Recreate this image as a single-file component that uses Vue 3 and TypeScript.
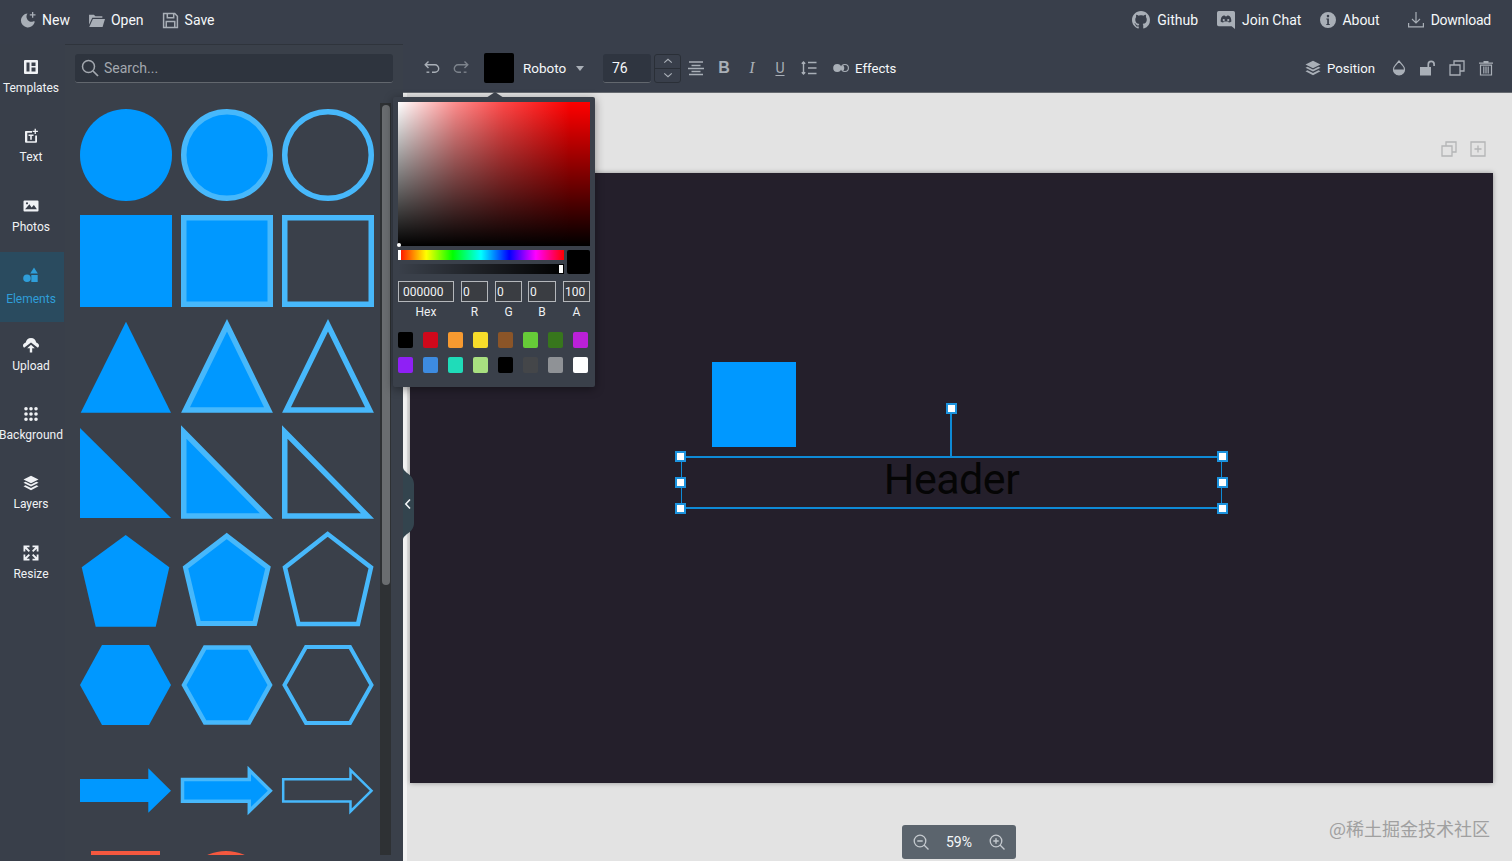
<script setup lang="ts">
interface SideItem { label: string; active?: boolean; paths: string[] }

const sideItems: SideItem[] = [
  { label: 'Templates', paths: ['M2 1h12a1 1 0 011 1v12a1 1 0 01-1 1H2a1 1 0 01-1-1V2a1 1 0 011-1zm1.500 2.500v9h3v-9h-3zm5 0v3.500h4V3.500h-4zm0 5v4h4v-4h-4z'] },
  { label: 'Text', paths: ['M2.800 3H9v1.700H4.300v8.500h7.900V7.500H14v6.200a1 1 0 01-1 1H3a1 1 0 01-1-1V3.800a.8.8 0 01.8-.8z', 'M5.500 6.500h5V8H8.800v3.800H7.200V8H5.500z', 'M11.600.8h1.300v2h2v1.300h-2v2h-1.300v-2h-2V2.800h2z'] },
  { label: 'Photos', paths: ['M1.500 2.500h13a1 1 0 011 1v9a1 1 0 01-1 1h-13a1 1 0 01-1-1v-9a1 1 0 011-1zm.6 8.800h11.800l-3-4.300-2.300 2.400-2.200-3.200zM4 4.200a1.100 1.100 0 100 2.200 1.100 1.100 0 000-2.200z'] },
  { label: 'Elements', active: true, paths: ['M11 .5l3.800 6H7.200z', 'M8.300 8h6.400v7H8.300z', 'M4 7.400a3.800 3.800 0 110 7.600 3.800 3.800 0 010-7.600z'] },
  { label: 'Upload', paths: ['M8 1c2.900 0 4.800 1.900 5.200 4.400 1.500.4 2.800 1.700 2.800 3.200 0 1-.5 1.700-1.100 2.200L8 5.500 1.100 10.800C.5 10.300 0 9.600 0 8.600c0-1.500 1.300-2.800 2.800-3.200C3.200 2.900 5.100 1 8 1z', 'M8 7.800l3.800 3.500H9.200V15.500H6.800v-4.200H4.200z'] },
  { label: 'Background', paths: ['M3 1a1.800 1.800 0 110 3.600A1.800 1.800 0 013 1zm5 0a1.800 1.800 0 110 3.600A1.800 1.800 0 018 1zm5 0a1.800 1.800 0 110 3.600A1.800 1.800 0 0113 1zM3 6.200a1.800 1.800 0 110 3.600 1.800 1.800 0 010-3.600zm5 0a1.800 1.800 0 110 3.600 1.800 1.800 0 010-3.600zm5 0a1.800 1.800 0 110 3.600 1.800 1.800 0 010-3.600zM3 11.400a1.800 1.800 0 110 3.600 1.800 1.800 0 010-3.600zm5 0a1.800 1.800 0 110 3.600 1.800 1.800 0 010-3.600zm5 0a1.800 1.800 0 110 3.600 1.800 1.800 0 010-3.600z'] },
  { label: 'Layers', paths: ['M8 .8l7.500 3.700L8 8.300.5 4.500z', 'M2.500 6.800L8 9.600l5.500-2.800 2 1L8 11.600.5 7.800z', 'M2.500 10.200L8 13l5.500-2.800 2 1L8 15.200.5 11.200z'] },
  { label: 'Resize', paths: ['M.5.5h6V2.300H3.700L7 5.700 5.700 7 2.300 3.700V6.500H.5z', 'M15.500.5h-6V2.300h2.800L9 5.700 10.300 7l3.400-3.300V6.500h1.800z', 'M.5 15.500h6v-1.800H3.700L7 10.300 5.700 9l-3.400 3.300V9.500H.5z', 'M15.500 15.500h-6v-1.800h2.800L9 10.300 10.300 9l3.400 3.300V9.500h1.800z'] }
]

const swatches: string[] = [
  '#000000', '#d0081b', '#f79a30', '#f6dc2a', '#8b5528', '#66cc38', '#37761c', '#bb20d8',
  '#8f20f5', '#3d8be0', '#1fdcb9', '#a8e080', '#000000', '#444649', '#8f9296', '#ffffff'
]

const colorFields: { label: string; value: string; kind: string }[] = [
  { label: 'Hex', value: '000000', kind: 'hex' },
  { label: 'R', value: '0', kind: 'r' },
  { label: 'G', value: '0', kind: 'g' },
  { label: 'B', value: '0', kind: 'b' },
  { label: 'A', value: '100', kind: 'a' }
]

const handles: string[] = ['tl', 'tr', 'ml', 'mr', 'bl', 'br']
</script>

<template>
  <div class="app">
    <header class="nav">
      <div class="nav-group">
        <div class="nav-btn">
          <svg class="ic" viewBox="0 0 16 16"><path d="M7.500 1.500a7 7 0 107.300 8.300c-.6-.5-1.100-.6-1.800-.3a4.700 4.700 0 01-6.200-3.300 5 5 0 01.700-4.700z"/><path d="M12 0h1.300v2.200h2.200v1.300h-2.200v2.200H12V3.500H9.800V2.200H12z"/></svg>
          <span>New</span>
        </div>
        <div class="nav-btn">
          <svg class="ic ic-17" viewBox="0 0 16 16"><path d="M1 2.500h4.500L7 4h6.500v1.500H4L1 12z"/><path d="M4.600 6.500H16l-2.300 7.500H1.200z"/></svg>
          <span>Open</span>
        </div>
        <div class="nav-btn">
          <svg class="ic ic-17" viewBox="0 0 16 16"><path d="M1.500 1.500h10.500l2.500 2.500v10.500H1.500zM5 1.500v4h6v-4M4 14.500V9h8v5.500" fill="none" stroke="currentColor" stroke-width="1.400"/></svg>
          <span>Save</span>
        </div>
      </div>
      <div class="nav-group nav-right">
        <div class="nav-btn">
          <svg class="ic ic-18" viewBox="0 0 16 16"><path d="M8 0C3.580 0 0 3.580 0 8c0 3.540 2.290 6.530 5.470 7.590.4.070.55-.17.55-.38 0-.19-.01-.82-.01-1.490-2.010.37-2.530-.49-2.690-.94-.09-.23-.48-.94-.82-1.130-.28-.15-.68-.52-.01-.53.63-.01 1.080.58 1.230.82.72 1.210 1.870.87 2.330.66.070-.52.28-.87.51-1.070-1.780-.2-3.640-.89-3.640-3.950 0-.87.31-1.590.82-2.150-.08-.2-.36-1.020.08-2.120 0 0 .67-.21 2.200.82.64-.18 1.320-.27 2-.27.68 0 1.360.09 2 .27 1.530-1.040 2.200-.82 2.200-.82.44 1.100.16 1.920.08 2.120.51.56.82 1.270.82 2.150 0 3.070-1.870 3.750-3.650 3.950.29.25.54.73.54 1.480 0 1.070-.01 1.930-.01 2.200 0 .21.15.46.55.38A8.013 8.013 0 0016 8c0-4.420-3.580-8-8-8z"/></svg>
          <span>Github</span>
        </div>
        <div class="nav-btn">
          <svg class="ic ic-18" viewBox="0 0 16 16"><path fill-rule="evenodd" d="M1.500 0h13A1.500 1.500 0 0116 1.500V16l-3-2.500H1.500A1.500 1.500 0 010 12V1.500A1.500 1.500 0 011.500 0zM5 4.500C4 5 3.300 6.800 3.200 9.300c.7.7 1.600 1 2.300 1l.6-.9h3.800l.6.9c.7 0 1.600-.3 2.300-1-.1-2.500-.8-4.300-1.800-4.800-.7-.3-1.400-.4-1.900-.4l-.2.5H7.100l-.2-.5c-.5 0-1.200.1-1.900.4zM6 7a1 1 0 110 2 1 1 0 010-2zm4 0a1 1 0 110 2 1 1 0 010-2z"/></svg>
          <span>Join Chat</span>
        </div>
        <div class="nav-btn nav-about">
          <svg class="ic" viewBox="0 0 16 16"><path fill-rule="evenodd" d="M8 0a8 8 0 110 16A8 8 0 018 0zm0 2.800a1.300 1.300 0 100 2.600 1.300 1.300 0 000-2.600zM6.300 6.500v1.100h.9v4.300h-.9V13h3.500v-1.100h-.9V6.500z"/></svg>
          <span>About</span>
        </div>
        <div class="nav-btn nav-dl">
          <svg class="ic" viewBox="0 0 16 16"><path d="M7.400 0h1.200v9.600l3-3 .8.800L8 11.800 3.600 7.400l.8-.8 3 3z"/><path d="M0 11h1.200v3.300h13.600V11H16v4.500H0z"/></svg>
          <span>Download</span>
        </div>
      </div>
    </header>

    <div class="body">
      <aside class="sidebar">
        <div v-for="item in sideItems" :key="item.label" class="side-item" :class="{ active: item.active }">
          <svg class="side-ic" viewBox="0 0 16 16">
            <path v-for="(d, i) in item.paths" :key="i" fill-rule="evenodd" :d="d" />
          </svg>
          <span class="side-label">{{ item.label }}</span>
        </div>
      </aside>

      <section class="panel">
        <div class="search">
          <svg class="ic ic-18" viewBox="0 0 18 18"><circle cx="7.500" cy="7.500" r="6" fill="none" stroke="currentColor" stroke-width="1.500"/><path d="M12 12l5 5" fill="none" stroke="currentColor" stroke-width="1.700"/></svg>
          <span>Search...</span>
        </div>
        <div class="scroll-area">
          <div class="shape-grid">
            <svg class="shape" viewBox="0 0 92 92"><circle cx="46" cy="46" r="46" class="f"/></svg>
            <svg class="shape" viewBox="0 0 92 92"><circle cx="46" cy="46" r="43.250" class="f s"/></svg>
            <svg class="shape" viewBox="0 0 92 92"><circle cx="46" cy="46" r="43.250" class="n s"/></svg>

            <svg class="shape" viewBox="0 0 92 92"><rect width="92" height="92" class="f"/></svg>
            <svg class="shape" viewBox="0 0 92 92"><rect x="2.750" y="2.750" width="86.500" height="86.500" class="f s"/></svg>
            <svg class="shape" viewBox="0 0 92 92"><rect x="2.750" y="2.750" width="86.500" height="86.500" class="n s"/></svg>

            <svg class="shape" viewBox="0 0 92 92"><polygon points="46,.7 .7,91.700 91,91.700" class="f"/></svg>
            <svg class="shape" viewBox="0 0 92 92"><polygon points="46,4.300 4.500,89 87.500,89" class="f s"/></svg>
            <svg class="shape" viewBox="0 0 92 92"><polygon points="46,4.300 4.500,89 87.500,89" class="n s"/></svg>

            <svg class="shape" viewBox="0 0 92 92"><polygon points="0,1 0,91 91,91" class="f"/></svg>
            <svg class="shape" viewBox="0 0 92 92"><polygon points="2.750,5 2.750,89 85.500,89" class="f s"/></svg>
            <svg class="shape" viewBox="0 0 92 92"><polygon points="2.750,5 2.750,89 85.500,89" class="n s"/></svg>

            <svg class="shape" viewBox="0 0 92 92"><polygon points="45.700,2 1.700,34.300 15.700,93.700 75.700,93.700 89.300,34.300" class="f"/></svg>
            <svg class="shape" viewBox="0 0 92 92"><polygon points="45.700,3 4.500,34.500 17.700,90.500 73.700,90.500 87,34.500" class="f s s5"/></svg>
            <svg class="shape" viewBox="0 0 92 92"><polygon points="45.700,1 3,34.500 16.500,91 76,91 89,34.500" class="n s s45"/></svg>

            <svg class="shape" viewBox="0 0 92 92"><polygon points="0,46 22,6 69,6 91,46 69,86 22,86" class="f"/></svg>
            <svg class="shape" viewBox="0 0 92 92"><polygon points="3,46 24,8.500 68,8.500 89,46 68,83.500 24,83.500" class="f s s45"/></svg>
            <svg class="shape" viewBox="0 0 92 92"><polygon points="2.500,46 24,8 68,8 89.500,46 68,84 24,84" class="n s s4"/></svg>

            <svg class="shape" viewBox="0 0 92 92"><polygon points="0,34 68.300,34 68.300,23.300 91,45.700 68.300,67.700 68.300,57 0,57" class="f"/></svg>
            <svg class="shape" viewBox="0 0 92 92"><polygon points="1.500,34.500 68.300,34.500 68.300,25 89.300,45.700 68.300,66 68.300,56.200 1.500,56.200" class="f s s3"/></svg>
            <svg class="shape" viewBox="0 0 92 92"><polygon points="1.200,34.200 68.500,34.200 68.500,25 89.500,45.700 68.500,66.500 68.500,56.500 1.200,56.500" class="n s s25"/></svg>

            <svg class="shape" viewBox="0 0 92 92"><rect x="11" width="69" height="92" fill="#f4583f"/></svg>
            <svg class="shape" viewBox="0 0 92 92"><ellipse cx="45" cy="46" rx="46" ry="46" fill="#f4583f"/></svg>
            <svg class="shape" viewBox="0 0 92 92"></svg>
          </div>
          <div class="scrollbar"><div class="thumb"></div></div>
        </div>
      </section>

      <main class="workspace">
        <div class="toolbar">
          <div class="tb-btn">
            <svg class="ic" viewBox="0 0 16 16"><path d="M4.500 1.500L1.200 4.800l3.300 3.300M2 4.800h9a3.700 3.700 0 010 7.400H8" class="ln"/><path d="M2.500 12.200h2.800" class="ln"/></svg>
          </div>
          <div class="tb-btn dim">
            <svg class="ic" viewBox="0 0 16 16"><path d="M11.500 1.500l3.300 3.300-3.300 3.300M14 4.800H5a3.700 3.700 0 000 7.400h3" class="ln"/><path d="M10.700 12.200h2.800" class="ln"/></svg>
          </div>
          <div class="color-box"></div>
          <div class="font-btn">
            <span>Roboto</span>
            <i class="caret"></i>
          </div>
          <div class="size-input"><span>76</span></div>
          <div class="stepper">
            <div class="step"><svg viewBox="0 0 12 7" class="chev"><path d="M1.500 5.500L6 1.500l4.500 4" class="ln"/></svg></div>
            <div class="step"><svg viewBox="0 0 12 7" class="chev"><path d="M1.500 1.500L6 5.500l4.500-4" class="ln"/></svg></div>
          </div>
          <div class="tb-btn w28">
            <svg class="ic" viewBox="0 0 16 16"><path d="M1 2h14M3.500 5.500h9M0 8.500h16M3.500 11.500h9M1 14.500h14" class="ln"/></svg>
          </div>
          <div class="tb-btn w28 glyph bold">B</div>
          <div class="tb-btn w28 glyph ital">I</div>
          <div class="tb-btn w28 glyph under">U</div>
          <div class="tb-btn w30">
            <svg class="ic" viewBox="0 0 16 16"><path d="M2.500 2v12M.8 3.800L2.500 2l1.700 1.800M.8 12.200L2.500 14l1.700-1.800M7 2.500h8.500M7 8h8.500M7 13.500h8.500" class="ln"/></svg>
          </div>
          <div class="tb-text effects">
            <svg class="ic" viewBox="0 0 16 16"><circle cx="4.200" cy="8" r="4"/><circle cx="11.900" cy="8" r="3.500" fill="none" stroke="currentColor" stroke-width="1.100"/><path d="M10 4.900a4.400 4.400 0 010 6.200 4.600 4.600 0 010-6.200z"/></svg>
            <span>Effects</span>
          </div>

          <div class="tb-right">
            <div class="tb-text">
              <svg class="ic" viewBox="0 0 16 16"><path d="M8 .8l7.500 3.700L8 8.300.5 4.500z"/><path d="M2.500 6.800L8 9.600l5.500-2.800 2 1L8 11.600.5 7.800z"/><path d="M2.500 10.200L8 13l5.500-2.800 2 1L8 15.200.5 11.200z"/></svg>
              <span>Position</span>
            </div>
            <div class="tb-btn">
              <svg class="ic" viewBox="0 0 16 16"><path d="M8 1L3.900 5.800A5.500 5.500 0 1012.100 5.800z" fill="none" stroke="currentColor" stroke-width="1.200"/><path d="M2.500 9.500h11a5.500 5.500 0 01-11 0z"/></svg>
            </div>
            <div class="tb-btn">
              <svg class="ic" viewBox="0 0 16 16"><path d="M0 7h11v8.500H0z"/><path d="M8.300 7V4.200a2.900 2.900 0 015.800 0v1.800" fill="none" stroke="currentColor" stroke-width="1.700"/></svg>
            </div>
            <div class="tb-btn">
              <svg class="ic" viewBox="0 0 16 16"><path d="M1 5h10v10H1zM5 5V1h10v10h-4" fill="none" stroke="currentColor" stroke-width="1.300"/></svg>
            </div>
            <div class="tb-btn">
              <svg class="ic" viewBox="0 0 16 16"><path d="M1 2.500h14v1.300H1zM5.500 1h5v1.500h-5z"/><path d="M2.500 5.200h11V15h-11zM5.800 6.500v7M8 6.500v7M10.200 6.500v7" fill="none" stroke="currentColor" stroke-width="1.200"/></svg>
            </div>
          </div>
        </div>

        <div class="canvas-area">
          <div class="page-tools">
            <svg class="ic" viewBox="0 0 16 16"><path d="M1 5h10v10H1zM5 5V1h10v10h-4" fill="none" stroke="currentColor" stroke-width="1.300"/></svg>
            <svg class="ic" viewBox="0 0 16 16"><path d="M1 1h14v14H1zM8 4.500v7M4.500 8h7" fill="none" stroke="currentColor" stroke-width="1.300"/></svg>
          </div>
          <div class="canvas">
            <div class="el-square"></div>
            <div class="selection">
              <span class="header-text">Header</span>
              <i v-for="h in handles" :key="h" class="handle" :class="h"></i>
              <i class="rot-line"></i>
              <i class="handle rot"></i>
            </div>
          </div>
        </div>

        <div class="popover">
          <i class="pop-arrow"></i>
          <div class="sat"><i class="sat-dot"></i></div>
          <div class="sliders">
            <div class="bars">
              <div class="hue"><i class="hue-knob"></i></div>
              <div class="alpha"><i class="alpha-knob"></i></div>
            </div>
            <div class="current"></div>
          </div>
          <div class="fields">
            <div v-for="f in colorFields" :key="f.label" class="field" :class="f.kind">
              <div class="field-box">{{ f.value }}</div>
              <span class="field-label">{{ f.label }}</span>
            </div>
          </div>
          <div class="swatches">
            <i v-for="(c, i) in swatches" :key="i" class="swatch" :style="{ background: c }"></i>
          </div>
        </div>

        <div class="collapse">
          <svg viewBox="0 0 11 73" class="collapse-bg"><path d="M0 0C0 6 11 7 11 17V56C11 66 0 67 0 73Z" fill="#33444e"/></svg>
          <svg viewBox="0 0 8 12" class="collapse-ic"><path d="M6 1.500L1.800 6 6 10.500" fill="none" stroke="#f2f4f6" stroke-width="1.600"/></svg>
        </div>

        <div class="zoom-pill">
          <svg class="ic" viewBox="0 0 16 16"><circle cx="7" cy="7" r="5.800" fill="none" stroke="currentColor" stroke-width="1.300"/><path d="M4.300 7h5.400M11 11l4.500 4.500" fill="none" stroke="currentColor" stroke-width="1.400"/></svg>
          <span>59%</span>
          <svg class="ic" viewBox="0 0 16 16"><circle cx="7" cy="7" r="5.800" fill="none" stroke="currentColor" stroke-width="1.300"/><path d="M4.300 7h5.400M7 4.300v5.400M11 11l4.500 4.500" fill="none" stroke="currentColor" stroke-width="1.400"/></svg>
        </div>
        <div class="watermark">@稀土掘金技术社区</div>
      </main>
    </div>
  </div>
</template>

<style scoped>
.app {
  display: flex;
  flex-direction: column;
  width: 1512px;
  height: 861px;
  overflow: hidden;
  font-family: Roboto, "Liberation Sans", sans-serif;
  font-size: 14px;
  color: #f5f8fa;
  background: #394049;
}
.ic {
  width: 16px;
  height: 16px;
  flex: none;
  fill: currentColor;
  color: #a9afb7;
}
.ic-17 { width: 17px; height: 17px; }
.ic-18 { width: 18px; height: 18px; }
.ln {
  fill: none;
  stroke: currentColor;
  stroke-width: 1.400;
}

.nav {
  flex: none;
  height: 40px;
  padding: 0 21px 4px 20px;
  display: flex;
  align-items: center;
  justify-content: space-between;
  background: #393f4b;
}
.nav-group { display: flex; align-items: center; gap: 18px; }
.nav-right { gap: 19px; }
.nav-btn { display: flex; align-items: center; gap: 6px; }
.nav-right .nav-btn { gap: 7px; }
.nav-right .nav-about { gap: 6px; }
.nav-right .nav-dl { gap: 7px; margin-left: 9px; }
.nav-dl span { letter-spacing: -0.250px; }

.body { flex: 1; display: flex; min-height: 0; }

.sidebar {
  flex: none;
  width: 65px;
  background: #393f4a;
}
.side-item {
  height: 69.400px;
  width: 64px;
  display: flex;
  flex-direction: column;
  align-items: center;
  padding: 15px 2px 0 0;
  box-sizing: border-box;
  color: #f0f2f5;
}
.side-item.active { background: #2a4b5f; color: #2f9ed9; }
.side-ic { width: 16px; height: 16px; fill: currentColor; }
.side-label {
  margin-top: 5px;
  font-size: 12px;
  line-height: 16px;
  white-space: nowrap;
}
.active .side-label { margin-top: 8px; }

.panel {
  flex: none;
  width: 338px;
  box-sizing: border-box;
  display: flex;
  flex-direction: column;
  background: #3a404a;
  border-top: 1px solid #2f343c;
}
.search {
  flex: none;
  margin: 9px 10px 0;
  height: 29px;
  box-sizing: border-box;
  padding-left: 6px;
  display: flex;
  align-items: center;
  gap: 5px;
  background: #2e343e;
  border-bottom: 1px solid #62676e;
  border-radius: 3px;
  color: #a3a8af;
}
.search .ic { color: #a3a8af; }
.scroll-area {
  position: relative;
  margin-top: 20px;
  height: 752px;
  overflow: hidden;
  padding: 6px 0 0 15px;
  box-sizing: border-box;
}
.shape-grid {
  display: grid;
  grid-template-columns: repeat(3, 92px);
  grid-auto-rows: 92px;
  column-gap: 9px;
  row-gap: 14px;
}
.shape { width: 92px; height: 92px; overflow: visible; }
.f { fill: #0098ff; }
.n { fill: none; }
.s { stroke: #47b8fb; stroke-width: 5.500; }
.s5 { stroke-width: 5; }
.s45 { stroke-width: 4.500; }
.s4 { stroke-width: 4; }
.s3 { stroke-width: 3.500; }
.s25 { stroke-width: 2.500; }
.scrollbar {
  position: absolute;
  top: 0;
  left: 315px;
  width: 11px;
  height: 752px;
  background: #2e3134;
}
.thumb {
  position: absolute;
  top: 2px;
  left: 2px;
  width: 8px;
  height: 480px;
  border-radius: 4px;
  background: #6a6d70;
}

.workspace {
  flex: 1;
  min-width: 0;
  position: relative;
  display: flex;
  flex-direction: column;
  background: #e3e3e3;
}
.toolbar {
  flex: none;
  height: 49px;
  box-sizing: border-box;
  padding: 0 12px 0 14px;
  display: flex;
  align-items: center;
  background: #393f4b;
  border-bottom: 1px solid #666a70;
}
.tb-btn {
  width: 29px;
  height: 30px;
  display: flex;
  align-items: center;
  justify-content: center;
  flex: none;
  color: #a9afb7;
}
.tb-btn.dim .ic { color: #7d838c; }
.w28 { width: 28px; }
.w30 { width: 30px; }
.glyph { font-size: 16px; color: #a9afb7; }
.bold { font-family: "Liberation Sans", sans-serif; font-weight: 700; }
.ital { font-family: "Liberation Serif", serif; font-style: italic; }
.under { text-decoration: underline; text-underline-offset: 2px; font-size: 14px; }
.color-box {
  margin-left: 9px;
  width: 30px;
  height: 30px;
  flex: none;
  background: #000;
  border-radius: 2px;
}
.font-btn {
  margin-left: 9px;
  width: 71px;
  flex: none;
  display: flex;
  align-items: center;
  gap: 10px;
  font-size: 13.500px;
}
.caret {
  width: 0;
  height: 0;
  border-left: 4.500px solid transparent;
  border-right: 4.500px solid transparent;
  border-top: 5px solid #a9afb7;
}
.size-input {
  flex: none;
  width: 48px;
  height: 29px;
  margin-left: 9px;
  box-sizing: border-box;
  padding-left: 9px;
  display: flex;
  align-items: center;
  background: #2f3540;
  border-bottom: 1px solid #62676e;
  border-radius: 3px;
}
.stepper {
  flex: none;
  margin-left: 3px;
  margin-right: 1px;
  width: 27px;
  height: 29px;
  display: flex;
  flex-direction: column;
  box-sizing: border-box;
  border: 1px solid #2a2f37;
  border-radius: 3px;
  overflow: hidden;
}
.step {
  flex: 1;
  display: flex;
  align-items: center;
  justify-content: center;
}
.step + .step { border-top: 1px solid #2a2f37; }
.chev { width: 10px; height: 6px; color: #a9afb7; }
.tb-text {
  display: flex;
  align-items: center;
  gap: 6px;
  flex: none;
  font-size: 13.200px;
}
.effects { margin-left: 9px; }
.tb-right {
  margin-left: auto;
  display: flex;
  align-items: center;
}
.tb-right .tb-text { margin-right: 9px; }

.canvas-area {
  flex: 1;
  min-height: 0;
  padding: 46px 19px 0 7px;
  display: flex;
  flex-direction: column;
  box-shadow: inset 4px 0 0 #f3f3f3;
}
.page-tools {
  flex: none;
  height: 20px;
  margin-bottom: 14px;
  padding-right: 7px;
  display: flex;
  justify-content: flex-end;
  align-items: center;
  gap: 13px;
}
.page-tools .ic { color: #b4b5b6; }
.canvas {
  position: relative;
  width: 1083px;
  height: 610px;
  background: #241f2b;
  box-shadow: 0 0 5px rgba(0, 0, 0, 0.35);
}
.el-square {
  position: absolute;
  left: 302px;
  top: 189px;
  width: 84px;
  height: 85px;
  background: #0098ff;
}
.selection {
  position: absolute;
  left: 271px;
  top: 283px;
  width: 541px;
  height: 53px;
  box-sizing: border-box;
  border: solid #0e8ad6;
  border-width: 2px 1.500px;
  display: flex;
  justify-content: center;
}
.header-text {
  font-size: 43px;
  letter-spacing: -0.500px;
  line-height: 42px;
  color: #050505;
}
.handle {
  position: absolute;
  width: 11px;
  height: 11px;
  box-sizing: border-box;
  background: #fff;
  border: 2px solid #1c93de;
}
.tl { left: -7px; top: -7px; }
.tr { right: -7px; top: -7px; }
.ml { left: -7px; top: 19px; }
.mr { right: -7px; top: 19px; }
.bl { left: -7px; bottom: -7px; }
.br { right: -7px; bottom: -7px; }
.rot { left: 264px; top: -55px; }
.rot-line {
  position: absolute;
  left: 268px;
  top: -45px;
  width: 2px;
  height: 44px;
  background: #0e8ad6;
}

.popover {
  position: absolute;
  z-index: 5;
  left: -10px;
  top: 53px;
  width: 202px;
  height: 290px;
  box-sizing: border-box;
  padding: 5px;
  background: #3a404a;
  box-shadow: 0 2px 10px rgba(0, 0, 0, 0.4);
  border-radius: 2px;
}
.pop-arrow {
  position: absolute;
  left: 93px;
  top: -5px;
  width: 0;
  height: 0;
  border-left: 9px solid transparent;
  border-right: 9px solid transparent;
  border-bottom: 6px solid #3a404a;
}
.sat {
  position: relative;
  width: 192px;
  height: 144px;
  background:
    linear-gradient(to top, #000, rgba(0, 0, 0, 0)),
    linear-gradient(to right, #fff, rgba(255, 255, 255, 0.55) 30%, rgba(255, 255, 255, 0.28) 55%, rgba(255, 255, 255, 0) 90%),
    #ff0000;
}
.sat-dot {
  position: absolute;
  left: -1px;
  bottom: -1px;
  width: 4px;
  height: 4px;
  border-radius: 50%;
  background: #fff;
}
.sliders { margin-top: 4px; display: flex; gap: 3px; }
.bars { width: 166px; display: flex; flex-direction: column; gap: 4px; }
.hue {
  position: relative;
  height: 10px;
  background: linear-gradient(to right, #f00 0%, #ff0 17%, #0f0 33%, #0ff 50%, #00f 67%, #f0f 83%, #f00 100%);
}
.hue-knob {
  position: absolute;
  left: 0;
  top: 0;
  width: 3px;
  height: 10px;
  background: #fff;
}
.alpha {
  position: relative;
  height: 10px;
  background: linear-gradient(to right, rgba(0, 0, 0, 0), #000);
}
.alpha-knob {
  position: absolute;
  right: 1px;
  top: 1px;
  width: 4px;
  height: 8px;
  background: #fff;
}
.current { width: 23px; height: 24px; background: #000; border-radius: 2px; }
.fields { margin-top: 7px; display: flex; gap: 7px; }
.field { display: flex; flex-direction: column; align-items: center; }
.field-box {
  width: 100%;
  height: 21px;
  box-sizing: border-box;
  border: 1px solid #b4b7bb;
  padding-left: 1px;
  line-height: 20px;
  font-size: 12px;
  background: #3a3d42;
  color: #f2f4f6;
}
.field.hex .field-box { padding-left: 4px; }
.field.hex { width: 56px; }
.field.r, .field.g { width: 27px; }
.field.b { width: 28px; }
.field.a { width: 27px; }
.field.g { margin-right: -1px; }
.field-label { margin-top: 2px; font-size: 12px; line-height: 16px; color: #eef0f2; }
.swatches {
  margin-top: 12px;
  display: grid;
  grid-template-columns: repeat(8, 15px);
  grid-auto-rows: 16px;
  column-gap: 10px;
  row-gap: 9px;
}
.swatch { border-radius: 2px; display: block; }

.collapse {
  position: absolute;
  z-index: 4;
  left: 0;
  top: 423px;
  width: 11px;
  height: 73px;
  display: flex;
  align-items: center;
  padding-left: 1px;
  box-sizing: border-box;
}
.collapse-bg {
  position: absolute;
  left: 0;
  top: 0;
  width: 11px;
  height: 73px;
}
.collapse-ic { position: relative; width: 8px; height: 12px; flex: none; }

.zoom-pill {
  position: absolute;
  left: 499px;
  top: 781px;
  width: 114px;
  height: 34px;
  box-sizing: border-box;
  padding: 0 11px;
  display: flex;
  align-items: center;
  justify-content: space-between;
  background: #5b646d;
  border-radius: 3px;
}
.zoom-pill .ic { color: #c4c9ce; }
.watermark {
  position: absolute;
  right: 22px;
  top: 773px;
  font-family: "Noto Sans CJK SC", "Liberation Sans", sans-serif;
  font-size: 18px;
  line-height: 22px;
  color: #a0a0a0;
}
</style>

<style>
html, body {
  margin: 0;
  background: #394049;
  overflow: hidden;
}
</style>
